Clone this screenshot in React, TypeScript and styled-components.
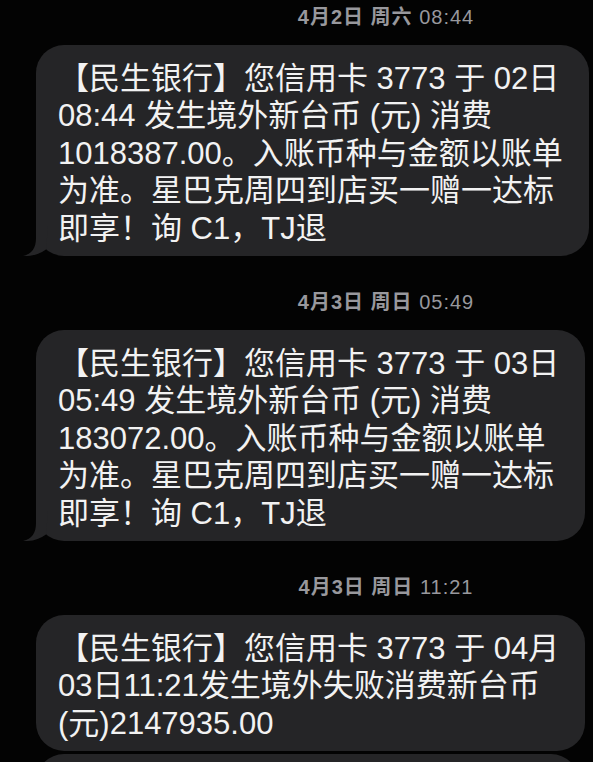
import React from "react";
import styled, { createGlobalStyle } from "styled-components";

type Message = {
  date: string;
  time: string;
  bubbles: string[][];
};

const messages: Message[] = [
  {
    date: "4月2日 周六",
    time: "08:44",
    bubbles: [
      [
        "【民生银行】您信用卡 3773 于 02日",
        "08:44 发生境外新台币 (元) 消费",
        "1018387.00。入账币种与金额以账单",
        "为准。星巴克周四到店买一赠一达标",
        "即享！询 C1，TJ退",
      ],
    ],
  },
  {
    date: "4月3日 周日",
    time: "05:49",
    bubbles: [
      [
        "【民生银行】您信用卡 3773 于 03日",
        "05:49 发生境外新台币 (元) 消费",
        "183072.00。入账币种与金额以账单",
        "为准。星巴克周四到店买一赠一达标",
        "即享！询 C1，TJ退",
      ],
    ],
  },
  {
    date: "4月3日 周日",
    time: "11:21",
    bubbles: [
      [
        "【民生银行】您信用卡 3773 于 04月",
        "03日11:21发生境外失败消费新台币",
        "(元)2147935.00",
      ],
      // next message in the group, only its top edge is on screen
      [],
    ],
  },
];

const App: React.FC = () => {
  return (
    <>
      <GlobalStyle />
      <Thread>
        {messages.map((msg, i) => (
          <Group key={i} $first={i === 0}>
            <Stamp>
              <StampDate>{msg.date}</StampDate> {msg.time}
            </Stamp>
            <Bubbles>
              {msg.bubbles.map((lines, j) => {
                const last = j === msg.bubbles.length - 1;
                if (lines.length === 0) return <PeekBubble key={j} />;
                return (
                  <Bubble key={j}>
                    {lines.map((line, k) => (
                      <Line key={k}>{line}</Line>
                    ))}
                    {last && (
                      <Tail viewBox="0 0 26 30" width="26" height="30">
                        <path d="M14 0 L14 12 C14 22 10 28 1 30 C10 30.5 18 28 24 23.4 L26 0 Z" />
                      </Tail>
                    )}
                  </Bubble>
                );
              })}
            </Bubbles>
          </Group>
        ))}
      </Thread>
    </>
  );
};

export default App;

const GlobalStyle = createGlobalStyle`
  html, body {
    margin: 0;
    padding: 0;
    background: #030303;
  }
`;

const Thread = styled.main`
  height: 762px;
  overflow: hidden;
  display: flex;
  flex-direction: column;
  padding: 0 8px 0 36px;
  font-family: "Liberation Sans", "Noto Sans CJK SC", sans-serif;
`;

const Group = styled.section<{ $first: boolean }>`
  display: flex;
  flex-direction: column;
  margin-top: ${(p) => (p.$first ? "4.5px" : "33.5px")};
`;

const Stamp = styled.div`
  padding-left: 151px;
  height: 24px;
  line-height: 24px;
  text-align: center;
  font-size: 20px;
  letter-spacing: 1px;
  color: #98989d;
  margin-bottom: 16.5px;
  white-space: nowrap;
`;

const StampDate = styled.span`
  font-weight: 600;
`;

const Bubbles = styled.div`
  display: flex;
  flex-direction: column;
  align-items: flex-start;
  gap: 3px;
`;

const Bubble = styled.div`
  position: relative;
  background: #252527;
  border-radius: 28px;
  padding: 14.75px 26px 8.75px 22px;
  color: #f2f2f2;
  font-size: 31px;
  line-height: 37.5px;
`;

const PeekBubble = styled.div`
  width: 543px;
  height: 60px;
  flex-shrink: 0;
  background: #252527;
  border-radius: 28px;
`;

const Line = styled.div`
  white-space: nowrap;
`;

const Tail = styled.svg`
  position: absolute;
  left: -14px;
  bottom: 0;
  fill: #252527;
`;
